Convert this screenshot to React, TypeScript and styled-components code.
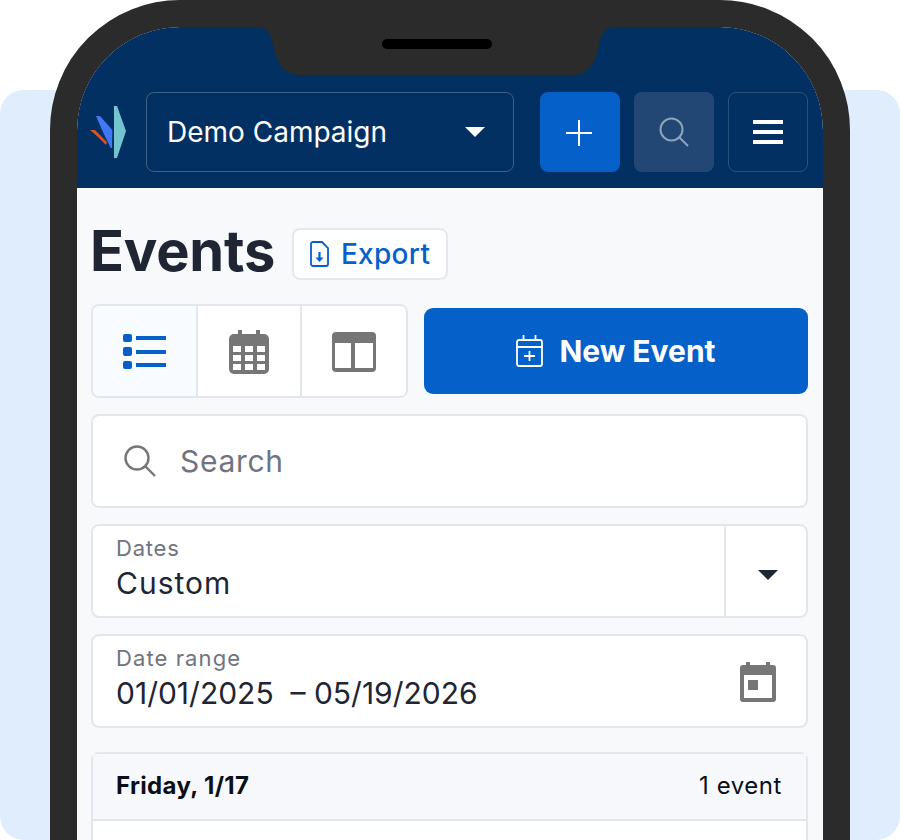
import React from 'react';
import styled, { createGlobalStyle } from 'styled-components';

const GlobalStyle = createGlobalStyle`
  html, body {
    margin: 0;
    padding: 0;
    background: #ffffff;
  }
  body {
    font-family: Inter, "Liberation Sans", sans-serif;
  }
`;

const Stage = styled.div`
  width: 900px;
  height: 840px;
  overflow: hidden;
  display: grid;
  background: #ffffff;
`;

const Backdrop = styled.div`
  grid-area: 1 / 1;
  margin-top: 90px;
  height: 750px;
  border-radius: 24px;
  background: #e0edfd;
`;

const Phone = styled.div`
  grid-area: 1 / 1;
  position: relative;
  width: 800px;
  height: 1000px;
  margin-left: 50px;
  box-sizing: border-box;
  border: 27px solid #2b2b2b;
  border-radius: 130px;
  background: #2b2b2b;
  overflow: hidden;
`;

const Screen = styled.div`
  height: 100%;
  border-radius: 103px 103px 0 0;
  overflow: hidden;
  background: #f8f9fb;
`;

const NotchShape = styled.svg`
  position: absolute;
  top: 0;
  left: 178px;
  display: block;
`;

const Speaker = styled.div`
  position: absolute;
  top: 12px;
  left: 305px;
  width: 110px;
  height: 10px;
  border-radius: 5px;
  background: #000000;
`;

const TopBar = styled.header`
  display: flex;
  align-items: center;
  height: 161px;
  box-sizing: border-box;
  padding: 65px 15px 16px 13px;
  background: #023062;
`;

const LogoMark = styled.svg`
  flex: none;
  width: 36px;
  height: 54px;
  margin-right: 20px;
`;

const CampaignSelect = styled.div`
  flex: none;
  display: flex;
  align-items: center;
  justify-content: space-between;
  width: 368px;
  height: 80px;
  box-sizing: border-box;
  padding: 0 28px 0 20px;
  margin-right: 26px;
  border: 1.5px solid rgba(255, 255, 255, 0.24);
  border-radius: 8px;
  color: #ffffff;
  font-size: 28px;
  font-weight: 400;
`;

const Caret = styled.span<{ $color: string; $drop?: number }>`
  display: block;
  width: 0;
  height: 0;
  margin-top: ${(p) => p.$drop ?? 0}px;
  border-left: 10px solid transparent;
  border-right: 10px solid transparent;
  border-top: 10px solid ${(p) => p.$color};
`;

const BarButton = styled.div<{ $kind: 'primary' | 'muted' | 'outline' }>`
  flex: none;
  width: 80px;
  height: 80px;
  margin-right: 14px;
  box-sizing: border-box;
  display: flex;
  align-items: center;
  justify-content: center;
  border-radius: 8px;
  background: ${(p) =>
    p.$kind === 'primary' ? '#0560c9' : p.$kind === 'muted' ? '#234775' : 'transparent'};
  border: ${(p) => (p.$kind === 'outline' ? '1.5px solid rgba(255,255,255,0.16)' : 'none')};

  &:last-child {
    margin-right: 0;
  }
`;

const Content = styled.main`
  padding: 40px 15px 0 14px;
`;

const TitleRow = styled.div`
  display: flex;
  align-items: center;
  gap: 17px;
  height: 52px;
`;

const Title = styled.h1`
  margin: 0 0 7px -1px;
  font-size: 56px;
  font-weight: 700;
  color: #1f2533;
  letter-spacing: -0.2px;
`;

const ExportButton = styled.div`
  width: 156px;
  height: 52px;
  box-sizing: border-box;
  display: flex;
  align-items: center;
  justify-content: center;
  gap: 12px;
  background: #ffffff;
  border: 2px solid #e5e8ee;
  border-radius: 8px;
  color: #0560c9;
  font-size: 28px;
  font-weight: 500;
  letter-spacing: 0.3px;
`;

const ActionRow = styled.div`
  display: flex;
  align-items: flex-start;
  gap: 16px;
  margin-top: 24px;
`;

const ViewSwitch = styled.div`
  flex: none;
  display: flex;
  width: 317px;
  height: 94px;
  box-sizing: border-box;
  border: 2px solid #e3e6ec;
  border-radius: 8px;
  background: #ffffff;
  overflow: hidden;
`;

const ViewOption = styled.div<{ $active?: boolean; $width: number }>`
  width: ${(p) => p.$width}px;
  display: flex;
  align-items: center;
  justify-content: center;
  padding-top: 1px;
  background: ${(p) => (p.$active ? '#f8fbff' : '#ffffff')};
  border-right: 2px solid #e3e6ec;
  box-sizing: border-box;

  &:last-child {
    border-right: none;
  }
`;

const NewEventButton = styled.div`
  flex: 1;
  height: 86px;
  margin-top: 4px;
  display: flex;
  align-items: center;
  justify-content: center;
  gap: 16px;
  border-radius: 9px;
  background: #0560c9;
  color: #ffffff;
  font-size: 30px;
  font-weight: 700;
`;

const Field = styled.div`
  display: flex;
  align-items: center;
  height: 94px;
  box-sizing: border-box;
  margin-top: 16px;
  border: 2px solid #e3e6ec;
  border-radius: 8px;
  background: #ffffff;
`;

const SearchField = styled(Field)`
  padding-left: 31px;
  gap: 24px;
  color: #6f7480;
  font-size: 30px;
  letter-spacing: 0.7px;
`;

const FieldBody = styled.div`
  flex: 1;
  padding: 0 0 7px 23px;
`;

const FieldLabel = styled.div<{ $spacing: number }>`
  margin-bottom: 4px;
  font-size: 22px;
  line-height: 26px;
  letter-spacing: ${(p) => p.$spacing}px;
  color: #6f7480;
`;

const FieldValue = styled.div<{ $spacing?: number }>`
  font-size: 30px;
  line-height: 36px;
  color: #1f2533;
  letter-spacing: ${(p) => p.$spacing ?? 0}px;
  white-space: pre;
`;

const CaretCell = styled.div`
  flex: none;
  align-self: stretch;
  width: 82px;
  box-sizing: border-box;
  padding-left: 4px;
  display: flex;
  align-items: center;
  justify-content: center;
  border-left: 2px solid #e3e6ec;
`;

const IconCell = styled.div`
  flex: none;
  width: 66px;
  margin-top: 2px;
  display: flex;
`;

const DayCard = styled.section`
  margin-top: 24px;
  border: 2px solid #e3e6ec;
  border-radius: 8px 8px 0 0;
  background: #ffffff;
  height: 200px;
`;

const DayHeader = styled.div`
  height: 67px;
  box-sizing: border-box;
  display: flex;
  align-items: center;
  justify-content: space-between;
  padding: 0 24px 2px 23px;
  background: #f6f8fc;
  border-bottom: 2px solid #e3e6ec;
  color: #0b0f18;
`;

const DayTitle = styled.div`
  font-size: 24px;
  font-weight: 700;
  letter-spacing: 0.35px;
`;

const DayCount = styled.div`
  font-size: 24px;
  font-weight: 400;
  letter-spacing: 0.55px;
`;

const App: React.FC = () => (
  <Stage>
    <GlobalStyle />
    <Backdrop />
    <Phone>
      <Screen>
        <TopBar>
          <LogoMark viewBox="0 0 36 54">
            <path d="M24 1 L27 1 L36 26 L27 53 L24 53 Z" fill="#72c4cf" />
            <path d="M6 11 L10 11 L22.3 25 L22 43 L20.7 43 L13 27 Z" fill="#4178f5" />
            <path d="M0 25 L5 25 L17 37 L16 40 L8 32 Z" fill="#e0501f" />
          </LogoMark>
          <CampaignSelect>
            Demo Campaign
            <Caret $color="#ffffff" />
          </CampaignSelect>
          <BarButton $kind="primary">
            <svg width="28" height="28" viewBox="0 0 28 28">
              <path d="M13 2v26M0 15h26" stroke="#ffffff" strokeWidth="2" fill="none" />
            </svg>
          </BarButton>
          <BarButton $kind="muted">
            <svg width="30" height="30" viewBox="0 0 30 30" fill="none" stroke="#8da3ba" strokeWidth="2">
              <circle cx="12.5" cy="12.5" r="11" />
              <path d="M20.5 20.5L29 29" />
            </svg>
          </BarButton>
          <BarButton $kind="outline">
            <svg width="30" height="26" viewBox="0 0 30 26" fill="#ffffff">
              <rect y="1" width="30" height="4" />
              <rect y="11" width="30" height="4" />
              <rect y="21" width="30" height="4" />
            </svg>
          </BarButton>
        </TopBar>
        <Content>
          <TitleRow>
            <Title>Events</Title>
            <ExportButton>
              <svg width="19" height="26" viewBox="0 0 19 26" fill="none" stroke="#0560c9" strokeWidth="1.8">
                <path d="M3 1h9l6 6v16a2 2 0 0 1-2 2H3a2 2 0 0 1-2-2V3a2 2 0 0 1 2-2z" />
                <path d="M9.5 11v7" strokeWidth="2.2" />
                <path d="M5.5 16.5h8L9.5 21z" fill="#0560c9" stroke="none" />
              </svg>
              Export
            </ExportButton>
          </TitleRow>
          <ActionRow>
            <ViewSwitch>
              <ViewOption $active $width={105}>
                <svg width="44" height="36" viewBox="0 0 44 36" fill="#0560c9">
                  <rect x="0" y="0" width="9" height="8" rx="2" />
                  <rect x="0" y="13" width="9" height="9" rx="2" />
                  <rect x="0" y="27" width="9" height="8" rx="2" />
                  <rect x="13" y="2" width="30" height="4" />
                  <rect x="13" y="16" width="30" height="4" />
                  <rect x="13" y="29" width="30" height="4" />
                </svg>
              </ViewOption>
              <ViewOption $width={104}>
                <svg width="40" height="44" viewBox="0 0 40 44" fill="#767676">
                  <rect x="9" y="0" width="4" height="8" />
                  <rect x="27" y="0" width="4" height="8" />
                  <path d="M5 4h30a5 5 0 0 1 5 5v30a5 5 0 0 1-5 5H5a5 5 0 0 1-5-5V9a5 5 0 0 1 5-5z" />
                  <g fill="#ffffff">
                    <rect x="4" y="16" width="8" height="6" />
                    <rect x="16" y="16" width="8" height="6" />
                    <rect x="28" y="16" width="8" height="6" />
                    <rect x="4" y="25" width="8" height="6" />
                    <rect x="16" y="25" width="8" height="6" />
                    <rect x="28" y="25" width="8" height="6" />
                    <rect x="4" y="34" width="8" height="6" />
                    <rect x="16" y="34" width="8" height="6" />
                    <rect x="28" y="34" width="8" height="6" />
                  </g>
                </svg>
              </ViewOption>
              <ViewOption $width={104}>
                <svg width="44" height="40" viewBox="0 0 44 40" fill="#767676">
                  <path d="M4 0h36a4 4 0 0 1 4 4v32a4 4 0 0 1-4 4H4a4 4 0 0 1-4-4V4a4 4 0 0 1 4-4z" />
                  <g fill="#ffffff">
                    <rect x="3" y="11" width="16" height="25" />
                    <rect x="23" y="11" width="18" height="25" />
                  </g>
                </svg>
              </ViewOption>
            </ViewSwitch>
            <NewEventButton>
              <svg width="27" height="32" viewBox="0 0 27 32" fill="none" stroke="#ffffff" strokeWidth="1.8">
                <rect x="1" y="5" width="25" height="26" rx="2" />
                <path d="M1 12h25M7.5 0v6M19.5 0v6M13.5 16v10M8 21h11" />
              </svg>
              New Event
            </NewEventButton>
          </ActionRow>
          <SearchField>
            <svg width="32" height="32" viewBox="0 0 32 32" fill="none" stroke="#767676" strokeWidth="2.4">
              <circle cx="13" cy="13" r="11.5" />
              <path d="M21.5 21.5L31 31" />
            </svg>
            Search
          </SearchField>
          <Field>
            <FieldBody>
              <FieldLabel $spacing={0.8}>Dates</FieldLabel>
              <FieldValue $spacing={1}>Custom</FieldValue>
            </FieldBody>
            <CaretCell>
              <Caret $color="#1f2533" $drop={8} />
            </CaretCell>
          </Field>
          <Field>
            <FieldBody>
              <FieldLabel $spacing={1.1}>Date range</FieldLabel>
              <FieldValue>01/01/2025  – 05/19/2026</FieldValue>
            </FieldBody>
            <IconCell>
              <svg width="36" height="40" viewBox="0 0 36 40" fill="#767676">
                <rect x="6" y="0" width="4" height="6" />
                <rect x="26" y="0" width="4" height="6" />
                <path fillRule="evenodd" d="M3 3h30a3 3 0 0 1 3 3v31a3 3 0 0 1-3 3H3a3 3 0 0 1-3-3V6a3 3 0 0 1 3-3zM4 13v23h28V13z" />
                <rect x="8" y="18" width="10" height="10" />
              </svg>
            </IconCell>
          </Field>
          <DayCard>
            <DayHeader>
              <DayTitle>Friday, 1/17</DayTitle>
              <DayCount>1 event</DayCount>
            </DayHeader>
          </DayCard>
        </Content>
      </Screen>
      <NotchShape width="362" height="48" viewBox="0 0 362 48">
        <path d="M0 0 C10 0 15 3 18 18 C22 38 30 48 45 48 H317 C332 48 340 38 344 18 C347 3 352 0 362 0 Z" fill="#2b2b2b" />
      </NotchShape>
      <Speaker />
    </Phone>
  </Stage>
);

export default App;
